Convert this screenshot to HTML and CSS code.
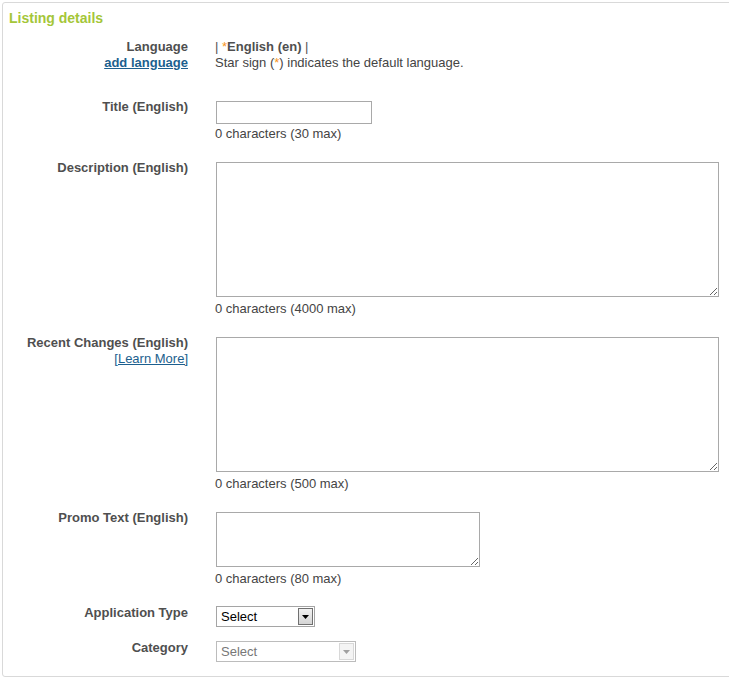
FILE: index.html
```html
<!DOCTYPE html>
<html>
<head>
<meta charset="utf-8">
<link rel="stylesheet" href="styles.css">
</head>
<body>
<div class="panel">
  <h2 class="heading">Listing details</h2>

  <div class="row row-lang">
    <div class="label">Language<br><a href="#" class="add-lang">add language</a></div>
    <div class="value">
      <div><span class="pipe">|</span> <span class="star">*</span><b>English (en)</b> <span class="pipe">|</span></div>
      <div>Star sign (<span class="star">*</span>) indicates the default language.</div>
    </div>
  </div>

  <div class="row">
    <div class="label">Title (English)</div>
    <div class="value field">
      <input type="text" class="input-title">
      <div class="count">0 characters (30 max)</div>
    </div>
  </div>

  <div class="row">
    <div class="label">Description (English)</div>
    <div class="value field">
      <textarea class="ta ta-large"></textarea>
      <div class="count">0 characters (4000 max)</div>
    </div>
  </div>

  <div class="row">
    <div class="label">Recent Changes (English)<br><a href="#" class="learn">[Learn More]</a></div>
    <div class="value field">
      <textarea class="ta ta-large"></textarea>
      <div class="count">0 characters (500 max)</div>
    </div>
  </div>

  <div class="row">
    <div class="label">Promo Text (English)</div>
    <div class="value field">
      <textarea class="ta ta-promo"></textarea>
      <div class="count">0 characters (80 max)</div>
    </div>
  </div>

  <div class="row row-select">
    <div class="label">Application Type</div>
    <div class="value field field-select">
      <div class="select select-type">
        <span class="select-text">Select</span>
        <span class="select-btn"><svg width="7" height="4" viewBox="0 0 7 4"><path d="M0 0H7L3.5 4Z" fill="#000"/></svg></span>
      </div>
    </div>
  </div>

  <div class="row row-select last">
    <div class="label">Category</div>
    <div class="value field field-select">
      <div class="select select-cat disabled">
        <span class="select-text">Select</span>
        <span class="select-btn"><svg width="7" height="4" viewBox="0 0 7 4"><path d="M0 0H7L3.5 4Z" fill="#a0a0a0"/></svg></span>
      </div>
    </div>
  </div>
</div>
</body>
</html>
```

FILE: styles.css
```css
html, body {
  margin: 0;
  padding: 0;
  background: #fff;
  overflow: hidden;
}

body {
  font-family: "Liberation Sans", Arial, sans-serif;
  font-size: 13px;
  line-height: 16px;
  color: #444;
}

.panel {
  margin: 2px 0 0 2px;
  width: 740px;
  border: 1px solid #d9d9d9;
  border-radius: 3px;
  padding-bottom: 14px;
  box-sizing: border-box;
}

.heading {
  margin: 0;
  padding: 7px 6px 0 6px;
  font-size: 14px;
  line-height: 17px;
  font-weight: bold;
  color: #a4c639;
}

.row {
  display: grid;
  grid-template-columns: 185px 1fr;
  column-gap: 27px;
  margin-top: 18px;
}

.row-lang {
  margin-top: 12px;
}

.row-lang + .row {
  margin-top: 28px;
}

.row-select + .row-select {
  margin-top: 13px;
}

.label {
  text-align: right;
  font-weight: bold;
  color: #4f4f4f;
}

.add-lang {
  color: #1c5f8e;
  font-weight: bold;
  text-decoration: underline;
}

.learn {
  color: #1c5f8e;
  font-weight: normal;
  text-decoration: underline;
}

.value {
  color: #444;
}

.value b {
  color: #4f4f4f;
}

.pipe {
  color: #555;
}

.star {
  color: #f7941d;
}

.field {
  padding-top: 2px;
}

.field-select {
  padding-top: 1px;
}

.input-title {
  display: block;
  margin: 0 0 0 1px;
  width: 156px;
  height: 23px;
  box-sizing: border-box;
  border: 1px solid #a9a9a9;
  padding: 2px 3px;
  font: 13px "Liberation Sans", Arial, sans-serif;
}

.ta {
  display: block;
  margin: 0 0 0 1px;
  box-sizing: border-box;
  border: 1px solid #a9a9a9;
  padding: 2px;
  font: 13px "Liberation Sans", Arial, sans-serif;
  resize: both;
}

.ta-large {
  width: 503px;
  height: 135px;
}

.ta-promo {
  width: 264px;
  height: 55px;
}

.input-title + .count {
  margin-top: 2px;
}

.ta + .count {
  margin-top: 4px;
}

.select {
  display: flex;
  margin-left: 1px;
  height: 21px;
  box-sizing: border-box;
  border: 1px solid #a5a5a5;
  background: #fff;
  align-items: stretch;
}

.select-type {
  width: 99px;
}

.select-cat {
  width: 140px;
}

.select-text {
  flex: 1;
  padding: 2px 0 0 4px;
  font-size: 13px;
  line-height: 16px;
  color: #000;
}

.select-btn {
  width: 15px;
  margin: 1px;
  box-sizing: border-box;
  border: 1px solid #707070;
  background: linear-gradient(#f2f2f2, #d4d4d4);
  display: flex;
  align-items: center;
  justify-content: center;
}

.disabled {
  border-color: #bcbcbc;
}

.disabled .select-text {
  color: #777;
}

.disabled .select-btn {
  border-color: #d8d8d8;
  background: #f4f4f4;
}
```
